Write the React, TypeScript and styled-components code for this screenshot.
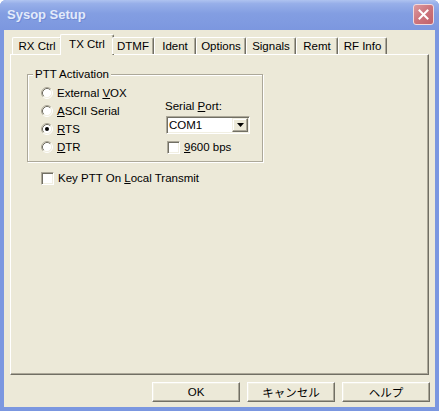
import React from 'react'
import styled, { createGlobalStyle } from 'styled-components'

const face = '#ECE9D8'
const light = '#F1EFE2'
const shadow = '#ACA899'
const dark = '#716F64'

const GlobalStyle = createGlobalStyle`
  html, body {
    margin: 0;
    padding: 0;
    background: #ffffff;
  }
  body {
    font-family: "Liberation Sans", "Noto Sans CJK JP", sans-serif;
    font-size: 11.5px;
    color: #000;
  }
`

const Window = styled.div`
  width: 439px;
  height: 411px;
  display: flex;
  flex-direction: column;
  background: #7B97E0;
  border-radius: 6px 6px 0 0;
  overflow: hidden;
`

const TitleBar = styled.div`
  height: 30px;
  flex: none;
  display: flex;
  align-items: center;
  box-sizing: border-box;
  padding: 0 5px 1px 7px;
  background: linear-gradient(#AFC3F0 0%, #97AFE9 12%, #839EE2 45%, #7C97DF 100%);
`

const Title = styled.span`
  flex: 1;
  font-family: "Liberation Sans", sans-serif;
  font-weight: bold;
  font-size: 13px;
  color: #E2EAFA;
  text-shadow: 1px 1px 0 #6F8AD6;
`

const CloseButton = styled.div`
  width: 21px;
  height: 21px;
  box-sizing: border-box;
  border: 1px solid #F1D9DC;
  border-radius: 3px;
  background: linear-gradient(135deg, #DC9AA0 0%, #CC747C 50%, #C0626B 100%);
  display: flex;
  align-items: center;
  justify-content: center;
`

const Client = styled.div`
  flex: 1;
  margin: 0 4px 4px;
  background: ${face};
  display: flex;
  flex-direction: column;
  padding: 4px 6px 5px;
`

const TabStrip = styled.div`
  display: flex;
  align-items: flex-end;
  height: 20px;
  padding-left: 2px;
  position: relative;
  z-index: 1;
`

const Tab = styled.div<{ $w: number; $active?: boolean }>`
  width: ${(p) => (p.$active ? p.$w + 4 : p.$w)}px;
  height: ${(p) => (p.$active ? 21 : 17)}px;
  margin: ${(p) => (p.$active ? '0 -2px -1px' : '0')};
  box-sizing: border-box;
  border-top: 1px solid #fff;
  border-left: 1px solid #fff;
  border-right: 1px solid ${dark};
  box-shadow: inset -1px 0 0 ${shadow};
  border-radius: 2px 2px 0 0;
  background: ${face};
  display: flex;
  align-items: center;
  justify-content: center;
  padding-bottom: ${(p) => (p.$active ? 2 : 0)}px;
  white-space: nowrap;
`

const Panel = styled.div`
  flex: 1;
  box-sizing: border-box;
  border-top: 1px solid #fff;
  border-left: 1px solid #fff;
  border-right: 1px solid ${dark};
  border-bottom: 1px solid ${dark};
  box-shadow: inset -1px -1px 0 ${shadow};
  padding: 19px 0 0 16px;
`

const GroupBox = styled.div`
  position: relative;
  width: 236px;
  height: 88px;
  box-sizing: border-box;
  border: 1px solid ${shadow};
  box-shadow: inset 1px 1px 0 #fff, 1px 1px 0 #fff;
  padding: 9px 0 0 13px;
  display: flex;
`

const Caption = styled.span`
  position: absolute;
  top: -8px;
  left: 5px;
  padding: 0 2px;
  line-height: 14px;
  background: ${face};
`

const RadioColumn = styled.div`
  width: 125px;
  display: flex;
  flex-direction: column;
`

const Row = styled.div`
  height: 18px;
  display: flex;
  align-items: center;
  gap: 4px;
  white-space: nowrap;
`

const SerialColumn = styled.div`
  display: flex;
  flex-direction: column;
  padding-top: 15px;
`

const FieldLabel = styled.span`
  line-height: 14px;
  margin-left: -1px;
`

const Combo = styled.div`
  margin-top: 3px;
  width: 84px;
  height: 18px;
  box-sizing: border-box;
  display: flex;
  padding: 1px;
  border: 1px solid;
  border-color: ${shadow} #fff #fff ${shadow};
  box-shadow: inset 1px 1px 0 ${dark}, inset -1px -1px 0 ${light};
  background: #fff;
`

const ComboText = styled.span`
  flex: 1;
  padding-left: 1px;
  line-height: 14px;
`

const DropButton = styled.div`
  width: 16px;
  box-sizing: border-box;
  background: ${face};
  border: 1px solid;
  border-color: ${light} ${dark} ${dark} ${light};
  box-shadow: inset -1px -1px 0 ${shadow}, inset 1px 1px 0 #fff;
  display: flex;
  align-items: center;
  justify-content: center;
`

const CheckRow = styled(Row)`
  margin-top: 4px;
  padding-left: 1px;
`

const KeyRow = styled(Row)`
  margin-top: 7px;
  padding-left: 14px;
`

const CheckBox = styled.span`
  width: 13px;
  height: 13px;
  flex: none;
  box-sizing: border-box;
  border: 1px solid;
  border-color: ${shadow} #fff #fff ${shadow};
  box-shadow: inset 1px 1px 0 ${dark}, inset -1px -1px 0 ${light};
  background: #fff;
`

const ButtonRow = styled.div`
  display: flex;
  justify-content: flex-end;
  gap: 7px;
  margin: 7px -1px 0 0;
`

const Button = styled.div`
  width: 88px;
  height: 20px;
  box-sizing: border-box;
  border: 1px solid;
  border-color: #fff ${dark} ${dark} #fff;
  box-shadow: inset -1px -1px 0 ${shadow}, inset 1px 1px 0 ${light};
  background: ${face};
  display: flex;
  align-items: center;
  justify-content: center;
`

const Radio: React.FC<{ checked?: boolean }> = ({ checked }) => (
  <svg width="12" height="12" viewBox="0 0 12 12" style={{ flex: 'none' }}>
    <circle cx="6" cy="6" r="4.5" fill="#fff" />
    <path d="M2.11 9.89 A5.5 5.5 0 0 1 9.89 2.11" fill="none" stroke={shadow} />
    <path d="M9.89 2.11 A5.5 5.5 0 0 1 2.11 9.89" fill="none" stroke="#fff" />
    <path d="M2.82 9.18 A4.5 4.5 0 0 1 9.18 2.82" fill="none" stroke={dark} />
    <path d="M9.18 2.82 A4.5 4.5 0 0 1 2.82 9.18" fill="none" stroke={light} />
    {checked && <circle cx="6" cy="6" r="2" fill="#000" />}
  </svg>
)

const tabs = [
  { label: 'RX Ctrl', w: 50 },
  { label: 'TX Ctrl', w: 50, active: true },
  { label: 'DTMF', w: 42 },
  { label: 'Ident', w: 42 },
  { label: 'Options', w: 50 },
  { label: 'Signals', w: 50 },
  { label: 'Remt', w: 42 },
  { label: 'RF Info', w: 49 },
]

const App: React.FC = () => {
  return (
    <>
      <GlobalStyle />
      <Window>
        <TitleBar>
          <Title>Sysop Setup</Title>
          <CloseButton>
            <svg width="11" height="11" viewBox="0 0 11 11">
              <path d="M1.5 1.5 L9.5 9.5 M9.5 1.5 L1.5 9.5" stroke="#fff" strokeWidth="2" strokeLinecap="square" />
            </svg>
          </CloseButton>
        </TitleBar>
        <Client>
          <TabStrip>
            {tabs.map((t) => (
              <Tab key={t.label} $w={t.w} $active={t.active}>
                {t.label}
              </Tab>
            ))}
          </TabStrip>
          <Panel>
            <GroupBox>
              <Caption>PTT Activation</Caption>
              <RadioColumn>
                <Row>
                  <Radio />
                  <span>External <u>V</u>OX</span>
                </Row>
                <Row>
                  <Radio />
                  <span><u>A</u>SCII Serial</span>
                </Row>
                <Row>
                  <Radio checked />
                  <span><u>R</u>TS</span>
                </Row>
                <Row>
                  <Radio />
                  <span><u>D</u>TR</span>
                </Row>
              </RadioColumn>
              <SerialColumn>
                <FieldLabel>Serial <u>P</u>ort:</FieldLabel>
                <Combo>
                  <ComboText>COM1</ComboText>
                  <DropButton>
                    <svg width="7" height="4" viewBox="0 0 7 4">
                      <path d="M0 0 H7 L3.5 4 Z" fill="#000" />
                    </svg>
                  </DropButton>
                </Combo>
                <CheckRow>
                  <CheckBox />
                  <span><u>9</u>600 bps</span>
                </CheckRow>
              </SerialColumn>
            </GroupBox>
            <KeyRow>
              <CheckBox />
              <span>Key PTT On <u>L</u>ocal Transmit</span>
            </KeyRow>
          </Panel>
          <ButtonRow>
            <Button>OK</Button>
            <Button>キャンセル</Button>
            <Button>ヘルプ</Button>
          </ButtonRow>
        </Client>
      </Window>
    </>
  )
}

export default App
